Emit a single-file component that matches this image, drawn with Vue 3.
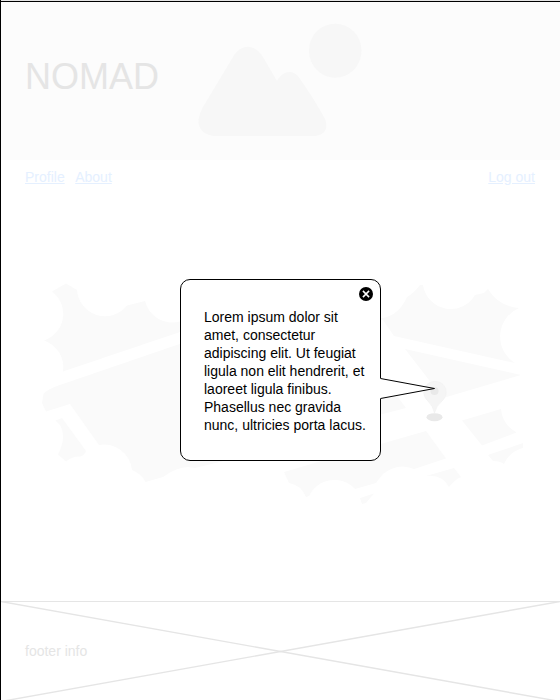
<script setup>
const links = ['Profile', 'About']
const lines = [
  'Lorem ipsum dolor sit',
  'amet, consectetur',
  'adipiscing elit. Ut feugiat',
  'ligula non elit hendrerit, et',
  'laoreet ligula finibus.',
  'Phasellus nec gravida',
  'nunc, ultricies porta lacus.',
]
const land = [
  'M52 291.5L66 283.5L77 290A28 28 0 0 0 127 305.5L145 301A28 28 0 0 0 180 321.5L200 326L180 332L63 371.5A28 28 0 0 0 44 340.5A28 28 0 0 0 52 291.5Z',
  'M200 337L57 386Q48 389 43.500 394L42 403L46 411.500L70 404L99 445A28 28 0 0 1 132 470Q142 474 145.500 482L163 477Q177 467 188 467L195 468L240 457V337Z',
  'M55.500 420.500L62 418L86 451Q84 456 80 456.500Q73 456 66 461.500L58 454.500Q67 437 60 425Z',
  'M375 318L383 318Q399 315 407 297Q414 293 420 285L423 285A28 28 0 0 0 475 295L484 293L488 289Q498 306 519 308A31 31 0 0 0 515 363L394 336L383 320Z',
  'M405 349L521 375L443 398Z',
  'M375 390L397 396L406 408L375 416Z',
  'M462 420.500L501 409Q502 424 516.500 432.500L482 445.500Z',
  'M488 455L523 443V448Q509 452 504 464Q500 461 493 461Z',
  'M284 472L325 460L426 431L446 458.500L414 469Q398 462 383 474Q378 480 376 483L355 489A28 28 0 0 0 309 496L306 497Q301 485 289 483Z',
  'M360 498L374 493.500L366 503L362 504Z',
  'M426 476L454 468L461 477Q454 480 449 487Q442 474 426 476Z',
]
</script>

<template>
  <div class="page">
    <header class="hero">
      <h1>NOMAD</h1>
      <svg class="picture" viewBox="197 22 166 116" width="166" height="116">
        <path d="M213 136C200 134 197 124 199 117Q200 113 203 107L233 57C241 44 254 43 263 57L277 81C283 70 294 69 300 79Q315 100 325.500 120C328 129 325 134 316 136Z" />
        <ellipse cx="335.200" cy="50.700" rx="26.300" ry="27" />
      </svg>
    </header>
    <nav>
      <div class="left">
        <a v-for="l in links" :key="l">{{ l }}</a>
      </div>
      <a>Log out</a>
    </nav>
    <main>
      <svg class="map" viewBox="1 195 559 406" width="559" height="406">
        <path v-for="(d, i) in land" :key="i" class="land" :d="d" />
        <path class="pin" d="M434.500 413Q433 406 428 401C420 394 424 381.500 435 381.500C446 381.500 450 394 442 401Q436 406 434.500 413Z" />
        <circle class="hole" cx="434.500" cy="391" r="4" />
        <ellipse class="hole" cx="434.500" cy="417.200" rx="8" ry="4" />
      </svg>
      <section class="popup">
        <svg class="close" viewBox="0 0 14 14" width="14" height="14">
          <circle cx="7" cy="7" r="7" />
          <path d="M3.900 3.900L10.100 10.100M10.100 3.900L3.900 10.100" />
        </svg>
        <p><span v-for="t in lines" :key="t">{{ t }}</span></p>
        <svg class="tail" viewBox="380 377 56 23" width="56" height="23">
          <path class="fill" d="M380 378.300L435 388.500L380 398.700Z" />
          <path class="edge" d="M380.500 378.500L434.500 388.500L380.500 398.500" />
        </svg>
      </section>
    </main>
    <footer>
      <svg class="cross" viewBox="0 0 559 99" width="559" height="99">
        <path d="M0 0.500H559" />
        <path class="diagonal" d="M0 0.500L559 100.500M559 0.500L0 100.500" />
      </svg>
      <span>footer info</span>
    </footer>
  </div>
</template>

<style>
body {
  margin: 0;
  background: #fff;
}
</style>

<style scoped>
.page {
  position: relative;
  box-sizing: border-box;
  width: 560px;
  height: 700px;
  padding-top: 1px;
  border-left: 1px solid #000;
  overflow: hidden;
  display: flex;
  flex-direction: column;
  font: 14px/18px "Liberation Sans", Arial, sans-serif;
  box-shadow: inset 0 1px #e5e5e5;
}
.hero {
  box-sizing: border-box;
  height: 159px;
  flex: none;
  border-top: 1px solid #000;
  background: #fcfcfc;
  padding-left: 24px;
  display: flex;
  align-items: flex-start;
}
h1 {
  margin: 54px 0 0;
  width: 172px;
  font-size: 36px;
  line-height: 41px;
  font-weight: 400;
  color: #e5e5e5;
}
.picture {
  margin-top: 20px;
  fill: #f7f7f7;
}
nav {
  box-sizing: border-box;
  height: 35px;
  flex: none;
  padding: 8px 25px 0 24px;
  display: flex;
  justify-content: space-between;
}
.left {
  display: flex;
  gap: 10.500px;
}
a {
  color: #e5f0ff;
  text-decoration: underline;
}
main {
  position: relative;
  height: 406px;
  flex: none;
}
.map {
  display: block;
}
.land {
  fill: #fafafa;
}
.pin {
  fill: #f5f5f5;
  stroke: #f0f0f0;
  stroke-width: 0.6;
}
.hole {
  fill: #e9e9e9;
}
.popup {
  position: absolute;
  left: 179px;
  top: 84px;
  box-sizing: border-box;
  width: 201px;
  height: 182px;
  border: 1px solid #000;
  border-radius: 10px;
  background: #fff;
  padding: 28px 0 0 23px;
}
p {
  margin: 0;
  color: #000;
}
p span {
  display: block;
  white-space: nowrap;
}
.close {
  position: absolute;
  right: 7px;
  top: 7px;
}
.close path {
  stroke: #fff;
  stroke-width: 1.5;
  fill: none;
}
.tail {
  position: absolute;
  left: 199px;
  top: 97px;
}
.fill {
  fill: #fff;
}
.edge {
  fill: none;
  stroke: #000;
}
footer {
  position: relative;
  height: 99px;
  flex: none;
  padding: 41px 0 0 24px;
  box-sizing: border-box;
  color: #e5e5e5;
}
.cross {
  position: absolute;
  left: 0;
  top: 0;
  fill: none;
  stroke: #e5e5e5;
}
.diagonal {
  stroke-width: 1.4;
}
</style>
